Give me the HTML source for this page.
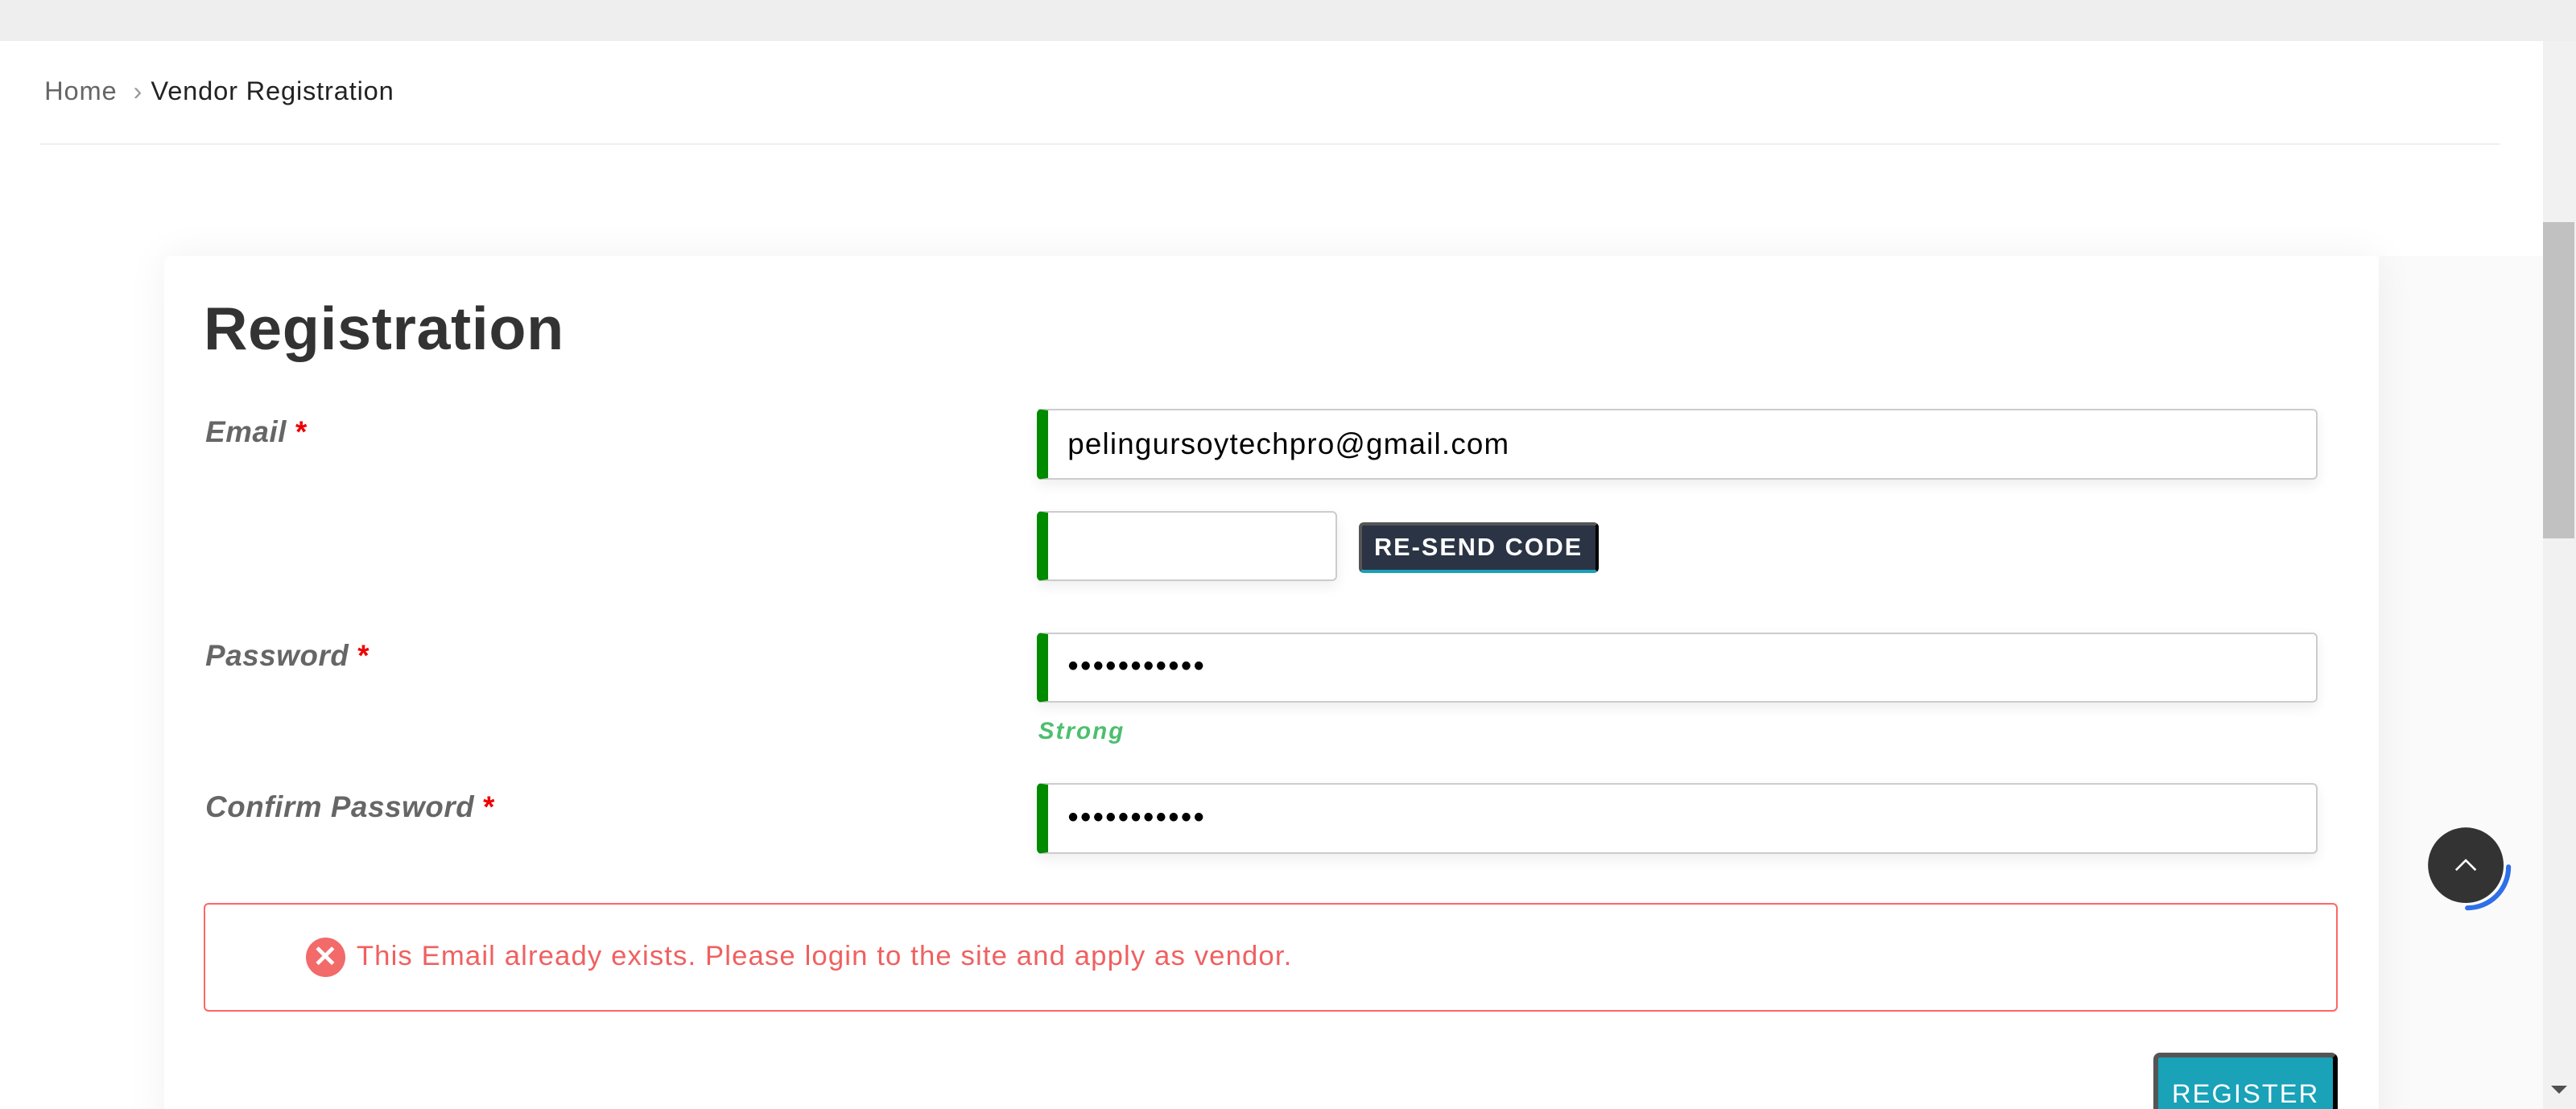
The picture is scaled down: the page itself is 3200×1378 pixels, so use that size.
<!DOCTYPE html>
<html><head><meta charset="utf-8"><style>
html,body{margin:0;padding:0;width:3200px;height:1378px;overflow:hidden;background:#fff}
#w{zoom:2.0408;width:1568px;height:675px;position:relative;font-family:"Liberation Sans",sans-serif}
.a{position:absolute;white-space:nowrap}
.inp{position:absolute;left:631px;width:772px;height:41px;border:1px solid #ccc;border-left:7px solid #008a00;border-radius:3px;background:#fff;box-shadow:0 3px 8px rgba(0,0,0,.07);box-sizing:content-box}
.lbl{position:absolute;left:125px;font-size:18px;font-weight:bold;font-style:italic;color:#666;letter-spacing:.3px}
.lbl b{color:#e00;font-style:normal}
.dots{position:absolute;left:12px;top:9px;font-size:19px;letter-spacing:1px;color:#000}
</style></head><body><div id="w">
<div class="a" style="left:0;top:0;width:1568px;height:25px;background:#eee"></div>
<div class="a" style="left:1448px;top:156px;width:100px;height:519px;background:#fafafa"></div>
<div class="a" style="left:1548px;top:25px;width:20px;height:650px;background:#f1f1f1"></div>
<div class="a" style="left:1548px;top:135px;width:19px;height:193px;background:#c1c1c1"></div>
<div class="a" style="left:1553px;top:661px;width:0;height:0;border-left:5px solid transparent;border-right:5px solid transparent;border-top:5px solid #505050"></div>
<div class="a" style="left:27px;top:46px;font-size:16px;color:#666;letter-spacing:.4px">Home <span style="color:#999;margin:0 5px">›</span><span style="color:#222">Vendor Registration</span></div>
<div class="a" style="left:24px;top:87px;width:1498px;height:1px;background:#eee"></div>
<div class="a" style="left:100px;top:156px;width:1348px;height:540px;background:#fff;border-radius:4px;box-shadow:0 0 25px rgba(0,0,0,.06)"></div>
<div class="a" style="left:124px;top:179px;font-size:37px;font-weight:bold;color:#333;letter-spacing:.3px">Registration</div>
<div class="lbl" style="top:253px">Email <b>*</b></div>
<div class="lbl" style="top:389px">Password <b>*</b></div>
<div class="lbl" style="top:481px">Confirm Password <b>*</b></div>
<div class="inp" style="top:249px"><div class="a" style="left:12px;top:10px;font-size:18px;color:#000;letter-spacing:.6px">pelingursoytechpro@gmail.com</div></div>
<div class="inp" style="top:311px;width:175px"></div>
<div class="a" style="left:827px;top:318px;width:142px;height:27px;background:#2b3445;border:2px solid #555;border-right-color:#000;border-bottom:2px solid #1aa0b8;border-radius:3px;color:#fff;font-size:15px;font-weight:bold;letter-spacing:1px;text-align:center;line-height:27px">RE-SEND CODE</div>
<div class="inp" style="top:385px"><div class="dots">•••••••••••</div></div>
<div class="a" style="left:632px;top:437px;font-size:14.5px;font-weight:bold;font-style:italic;color:#4cbf6e;letter-spacing:1px">Strong</div>
<div class="inp" style="top:477px"><div class="dots">•••••••••••</div></div>
<div class="a" style="left:124px;top:550px;width:1297px;height:64px;border:1px solid #f66;border-radius:3px"></div>
<div class="a" style="left:186px;top:571px;width:24px;height:24px;border-radius:50%;background:#f26a6a;color:#fff;text-align:center;line-height:24px;font-size:18px;font-weight:bold">✕</div>
<div class="a" style="left:217px;top:573px;font-size:17px;color:#f06060;letter-spacing:.55px">This Email already exists. Please login to the site and apply as vendor.</div>
<div class="a" style="left:1311px;top:641px;width:106px;height:40px;background:#19a2b8;border:3px solid #555;border-right-color:#000;border-radius:4px;color:#fff;font-size:16px;text-align:center;line-height:44px;letter-spacing:1px">REGISTER</div>
<svg class="a" style="left:1474px;top:500px" width="56" height="56" viewBox="0 0 56 56"><circle cx="27" cy="27" r="23" fill="#333"/><path d="M53 28 A25 25 0 0 1 28 53" stroke="#2f6fe8" stroke-width="3" fill="none" stroke-linecap="round"/><path d="M21 30 L27 24 L33 30" stroke="#fff" stroke-width="1.3" fill="none"/></svg>
</div></body></html>
